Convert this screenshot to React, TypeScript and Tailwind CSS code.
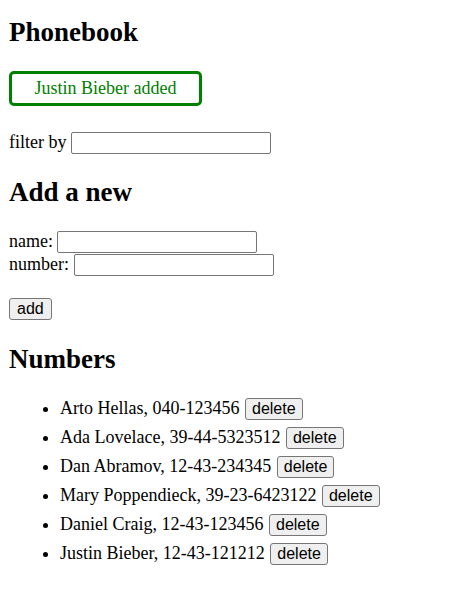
import React from 'react';

type Person = { name: string; number: string };

const persons: Person[] = [
  { name: 'Arto Hellas', number: '040-123456' },
  { name: 'Ada Lovelace', number: '39-44-5323512' },
  { name: 'Dan Abramov', number: '12-43-234345' },
  { name: 'Mary Poppendieck', number: '39-23-6423122' },
  { name: 'Daniel Craig', number: '12-43-123456' },
  { name: 'Justin Bieber', number: '12-43-121212' },
];

const inputClass =
  "w-[200px] h-[22px] border border-[#767676] rounded-[2px] bg-white px-[2px] py-px font-['Liberation_Sans',Arial,sans-serif] text-[16px] leading-[normal]";
const buttonClass =
  "inline-block border border-[#767676] rounded-[3px] bg-[#efefef] py-px font-['Liberation_Sans',Arial,sans-serif] text-[16px] leading-[normal] text-black";

const App: React.FC = () => {
  return (
    <div className="flex flex-col pl-[9px] font-['Liberation_Serif','Times_New_Roman',serif] text-[18px] leading-[normal] text-black bg-white min-h-[610px]">
      <h2 className="mt-[16.5px] text-[27px] font-bold leading-[31px]">Phonebook</h2>

      <div className="mt-[23.5px] w-[193px] border-[3px] border-[#008000] rounded-[5px] py-[4px] text-center text-[#008000] leading-[21px]">
        Justin Bieber added
      </div>

      <div className="mt-[26px] flex items-baseline">
        <span>filter by&nbsp;</span>
        <input className={inputClass} />
      </div>

      <h2 className="mt-[23px] text-[27px] font-bold leading-[31px]">Add a new</h2>

      <form className="flex flex-col">
        <div className="mt-[23px] flex items-baseline">
          <span>name:&nbsp;</span>
          <input className={inputClass} />
        </div>
        <div className="mt-px flex items-baseline">
          <span>number:&nbsp;</span>
          <input className={inputClass} />
        </div>
        <div className="mt-[22px] flex">
          <button type="submit" className={`${buttonClass} px-[7px]`}>add</button>
        </div>
      </form>

      <h2 className="mt-[24px] text-[27px] font-bold leading-[31px]">Numbers</h2>

      <ul className="mt-[19px] list-disc pl-[51px]">
        {persons.map(p => (
          <li key={p.name} className="leading-[29px]">
            {p.name}, {p.number}{' '}
            <button className={`${buttonClass} ml-px px-[6px]`}>delete</button>
          </li>
        ))}
      </ul>
    </div>
  );
};

export default App;
